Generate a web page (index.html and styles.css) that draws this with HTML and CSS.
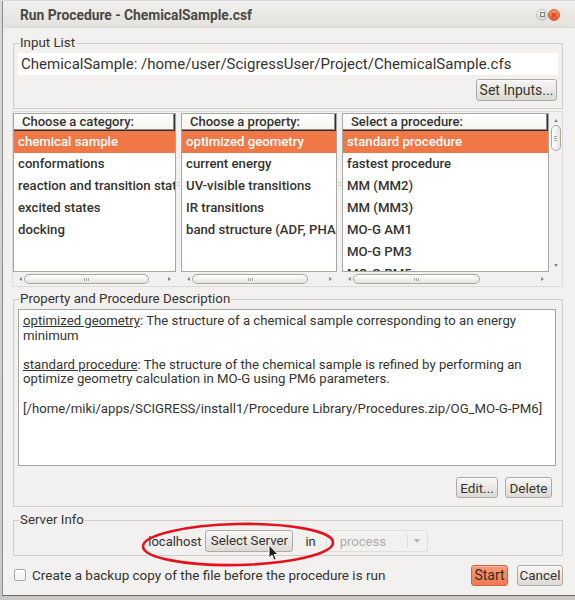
FILE: index.html
```html
<!DOCTYPE html>
<html>
<head>
<meta charset="utf-8">
<title>Run Procedure</title>
<link rel="stylesheet" href="styles.css">
</head>
<body>
<div class="desktop">
  <div class="window">
    <div class="titlebar">
      <span class="title">Run Procedure - ChemicalSample.csf</span>
      <div class="wbtns">
        <span class="wbtn wmax"><span class="sq"></span></span>
        <span class="wbtn wclose"><svg width="6" height="6" viewBox="0 0 6 6"><path d="M0.8 0.8 L5.2 5.2 M5.2 0.8 L0.8 5.2" stroke="#c7461c" stroke-width="1.2"/></svg></span>
      </div>
    </div>
    <div class="content">
      <fieldset class="group g-input">
        <legend>Input List</legend>
        <div class="field">ChemicalSample: /home/user/ScigressUser/Project/ChemicalSample.cfs</div>
        <div class="btnrow"><button class="btn btn-set">Set Inputs...</button></div>
      </fieldset>

      <div class="lists">
        <div class="col c1">
          <div class="box">
            <div class="hdr">Choose a category:</div>
            <ul class="items">
              <li class="sel">chemical sample</li>
              <li>conformations</li>
              <li>reaction and transition states</li>
              <li>excited states</li>
              <li>docking</li>
            </ul>
          </div>
          <div class="hscroll">
            <span class="arr arr-l"></span>
            <div class="track"><div class="thumb"><span class="grip"><i></i><i></i><i></i></span></div></div>
            <span class="arr arr-r"></span>
          </div>
        </div>
        <div class="split"><span class="sgrip"></span></div>
        <div class="col c2">
          <div class="box">
            <div class="hdr">Choose a property:</div>
            <ul class="items">
              <li class="sel">optimized geometry</li>
              <li>current energy</li>
              <li>UV-visible transitions</li>
              <li>IR transitions</li>
              <li>band structure (ADF, PHASE)</li>
            </ul>
          </div>
          <div class="hscroll">
            <span class="arr arr-l"></span>
            <div class="track"><div class="thumb"><span class="grip"><i></i><i></i><i></i></span></div></div>
            <span class="arr arr-r"></span>
          </div>
        </div>
        <div class="split"><span class="sgrip"></span></div>
        <div class="col c3">
          <div class="c3top">
            <div class="box">
              <div class="hdr">Select a procedure:</div>
              <ul class="items">
                <li class="sel">standard procedure</li>
                <li>fastest procedure</li>
                <li>MM (MM2)</li>
                <li>MM (MM3)</li>
                <li>MO-G AM1</li>
                <li>MO-G PM3</li>
                <li>MO-G PM5</li>
              </ul>
            </div>
            <div class="vscroll">
              <span class="varr varr-u"></span>
              <div class="vtrack"><div class="vthumb"><span class="vgrip"><i></i><i></i><i></i></span></div></div>
              <span class="varr varr-d"></span>
            </div>
          </div>
          <div class="c3bottom">
            <div class="hscroll">
              <span class="arr arr-l"></span>
              <div class="track"><div class="thumb"><span class="grip"><i></i><i></i><i></i></span></div></div>
              <span class="arr arr-r"></span>
            </div>
            <div class="corner"></div>
          </div>
        </div>
      </div>

      <fieldset class="group g-desc">
        <legend>Property and Procedure Description</legend>
        <div class="textarea">
          <p><u>optimized geometry</u>: The structure of a chemical sample corresponding to an energy<br>minimum</p>
          <p><u>standard procedure</u>: The structure of the chemical sample is refined by performing an<br>optimize geometry calculation in MO-G using PM6 parameters.</p>
          <p>[/home/miki/apps/SCIGRESS/install1/Procedure Library/Procedures.zip/OG_MO-G-PM6]</p>
        </div>
        <div class="btnrow btnrow-desc">
          <button class="btn btn-edit">Edit...</button>
          <button class="btn btn-del">Delete</button>
        </div>
      </fieldset>

      <fieldset class="group g-server">
        <legend>Server Info</legend>
        <div class="srow">
          <span class="host">localhost</span>
          <button class="btn btn-server">Select Server</button>
          <span class="in">in</span>
          <div class="combo"><span class="cmark"></span><span class="ctext">process</span><span class="carr"></span></div>
          <svg class="ring" width="200" height="50" viewBox="0 0 200 50"><ellipse cx="99" cy="24.5" rx="95" ry="20.5" transform="rotate(-1.2 99 24.5)" fill="none" stroke="#e5121b" stroke-width="2.6"/></svg>
          <svg class="cursor" width="12" height="18" viewBox="0 0 12 18"><path d="M1 1 L1 14 L4 11.2 L6.3 16.2 L8.3 15.3 L6.1 10.5 L10 10.5 Z" fill="#1e1e1e" stroke="#ffffff" stroke-width="1" stroke-linejoin="round"/></svg>
        </div>
      </fieldset>

      <div class="bottom">
        <label class="chk"><span class="box-chk"></span><span class="chk-text">Create a backup copy of the file before the procedure is run</span></label>
        <div class="actions">
          <button class="btn btn-start">Start</button>
          <button class="btn btn-cancel">Cancel</button>
        </div>
      </div>
    </div>
  </div>
</div>
</body>
</html>
```

FILE: styles.css
```css
* { box-sizing: border-box; }

html, body {
  margin: 0;
  padding: 0;
}

body {
  width: 575px;
  height: 600px;
  overflow: hidden;
  background: #cfcfcf;
  font-family: Roboto, "Noto Sans", "DejaVu Sans", sans-serif;
  color: #35342f;
}

.desktop {
  height: 600px;
  padding: 1px 0 0 2px;
  background: linear-gradient(#d8d8d8, #c8c8c8);
}

.window {
  width: 573px;
  height: 595px;
  background: #f2f1f0;
  border-left: 1px solid #8d8d8d;
  border-bottom: 1px solid #6e6e6e;
  display: flex;
  flex-direction: column;
  position: relative;
}

/* ---------- title bar ---------- */
.titlebar {
  height: 27px;
  flex: none;
  display: flex;
  align-items: center;
  padding: 1px 0 0 17px;
  background: linear-gradient(#f0efed, #e4e2de);
  border-bottom: 1px solid #dcd9d4;
}

.title {
  font-weight: 700;
  font-size: 13.8px;
  color: #4a4945;
}

.wbtns {
  margin-left: auto;
  margin-right: 15px;
  display: flex;
}

.wbtn {
  width: 12px;
  height: 12px;
  border-radius: 50%;
  display: flex;
  align-items: center;
  justify-content: center;
}

.wmax {
  background: linear-gradient(#f6f5f3, #d9d7d2);
  border: 1px solid #c3c0bb;
}

.wmax .sq {
  width: 5px;
  height: 5px;
  border: 1px solid #807e79;
}

.wclose {
  background: linear-gradient(#f79470, #e4582b);
  border: 1px solid #d65a30;
}

/* ---------- content ---------- */
.content {
  flex: 1;
  display: flex;
  flex-direction: column;
  padding: 0 12px 0 10px;
}

.group {
  margin: 0;
  padding: 0 4px;
  border: 1px solid #d2cfca;
  min-width: 0;
}

.group legend {
  padding: 0 1px;
  margin-left: 1px;
  font-size: 13.3px;
  line-height: 16px;
  color: #35342f;
}

.g-input {
  margin-top: 7px;
  padding-bottom: 7px;
}

.field {
  margin-top: 2px;
  height: 22px;
  background: #ffffff;
  padding-left: 3px;
  font-size: 15px;
  line-height: 22px;
  white-space: nowrap;
  overflow: hidden;
}

.btnrow {
  display: flex;
  justify-content: flex-end;
  margin-top: 4px;
}

.btn {
  font-family: inherit;
  font-size: 13.5px;
  color: #35342f;
  height: 22px;
  padding: 0;
  border: 1px solid #aeaba5;
  border-radius: 3px;
  background: linear-gradient(#f7f6f5, #dddad5);
  box-shadow: inset 0 1px 0 #ffffff;
  line-height: 18px;
  white-space: nowrap;
}

.btn-set { width: 81px; margin-right: 1px; font-size: 14px; }

/* ---------- lists ---------- */
.lists {
  margin-top: 2px;
  margin-left: -1px;
  height: 176px;
  border: 1px solid #dedbd6;
  padding-top: 1px;
  display: flex;
}

.col {
  display: flex;
  flex-direction: column;
  min-width: 0;
}

.c1 { width: 163px; }
.c2 { width: 156px; }
.c3 { flex: 1; }

.split {
  width: 5px;
  flex: none;
  display: flex;
  align-items: center;
  justify-content: center;
}

.sgrip {
  width: 3px;
  height: 4px;
  border-top: 1px solid #c9c6c1;
  border-bottom: 1px solid #c9c6c1;
  margin-top: -32px;
}

.box {
  height: 159px;
  border: 1px solid #aaa7a2;
  background: #ffffff;
  display: flex;
  flex-direction: column;
  overflow: hidden;
  min-width: 0;
}

.hdr {
  height: 17px;
  flex: none;
  padding-left: 8px;
  font-size: 13px;
  font-weight: 500;
  line-height: 16px;
  white-space: nowrap;
  background: linear-gradient(#ffffff, #f4f3f1);
  border-right: 1px solid #2f2f2f;
  border-bottom: 1px solid #2f2f2f;
  box-shadow: inset -1px -1px 0 #8e8c88;
}

.items {
  list-style: none;
  margin: 0;
  padding: 0;
  flex: 1;
  overflow: hidden;
}

.items li {
  height: 22px;
  line-height: 22px;
  padding-left: 4px;
  font-size: 13.2px;
  font-weight: 500;
  white-space: nowrap;
  overflow: hidden;
  text-overflow: clip;
}

.items li.sel {
  background: #f07746;
  color: #ffffff;
}

/* horizontal scrollbars */
.hscroll {
  height: 14px;
  display: flex;
  align-items: center;
  padding: 0 3px;
}

.arr {
  width: 8px;
  flex: none;
  display: flex;
  justify-content: center;
}

.arr::before {
  content: "";
  border-top: 2.5px solid transparent;
  border-bottom: 2.5px solid transparent;
}

.arr-l::before { border-right: 3px solid #8a8884; }
.arr-r::before { border-left: 3px solid #8a8884; }

.track {
  flex: 1;
  display: flex;
}

.thumb {
  height: 10px;
  border: 1px solid #aba8a3;
  border-radius: 5px;
  background: linear-gradient(#ffffff, #e6e4e0);
  display: flex;
  align-items: center;
  justify-content: center;
}

.c1 .thumb { width: 125px; }
.c2 .thumb { width: 116px; }
.c3 .thumb { width: 127px; }

.grip {
  display: flex;
  gap: 1px;
}

.grip i {
  width: 1px;
  height: 3px;
  background: #a7a5a0;
}

/* column 3 */
.c3top {
  display: flex;
}

.c3top .box { flex: 1; }

.c3bottom {
  display: flex;
}

.c3bottom .hscroll { flex: 1; }

.corner {
  width: 13px;
  flex: none;
}

.vscroll {
  width: 13px;
  flex: none;
  height: 159px;
  display: flex;
  flex-direction: column;
  align-items: center;
  padding: 3px 0;
}

.varr {
  height: 8px;
  flex: none;
  display: flex;
  align-items: center;
}

.varr::before {
  content: "";
  border-left: 2.5px solid transparent;
  border-right: 2.5px solid transparent;
}

.varr-u::before { border-bottom: 3px solid #8a8884; }
.varr-d::before { border-top: 3px solid #8a8884; }

.vtrack {
  flex: 1;
  width: 100%;
  display: flex;
  flex-direction: column;
  align-items: center;
}

.vthumb {
  width: 10px;
  height: 26px;
  margin-top: 1px;
  border: 1px solid #aba8a3;
  border-radius: 5px;
  background: linear-gradient(90deg, #ffffff, #e6e4e0);
  display: flex;
  align-items: center;
  justify-content: center;
}

.vgrip {
  display: flex;
  flex-direction: column;
  gap: 1px;
}

.vgrip i {
  width: 3px;
  height: 1px;
  background: #a7a5a0;
}

/* ---------- description ---------- */
.g-desc {
  margin-top: 4px;
  padding: 0 6px 8px 4px;
}

.textarea {
  margin-top: 2px;
  height: 157px;
  background: #ffffff;
  border: 1px solid #a9a6a1;
  padding: 4px 4px;
  font-size: 13.2px;
  line-height: 14.6px;
  white-space: nowrap;
  overflow: hidden;
}

.textarea p {
  margin: 0 0 14.6px 0;
}

.btnrow-desc {
  margin-top: 11px;
  gap: 7px;
  padding-right: 4px;
}

.btnrow-desc .btn { height: 21px; }
.btn-edit { width: 42px; }
.btn-del { width: 47px; }

/* ---------- server ---------- */
.g-server {
  margin-top: 5px;
  padding: 0 4px 3px 4px;
}

.srow {
  position: relative;
  margin-top: 2px;
  height: 22px;
  display: flex;
  align-items: center;
  justify-content: center;
  font-size: 13px;
}

.host { margin-right: 4px; }

.btn-server { width: 88px; font-size: 13.3px; }

.in { margin: 0 10px 0 12px; }

.combo {
  width: 102px;
  height: 22px;
  border: 1px solid #e2dfda;
  border-radius: 2px;
  background: #f2f1f0;
  display: flex;
  align-items: center;
  color: #aeaca7;
}

.cmark {
  width: 1px;
  height: 6px;
  background: #c9c6c1;
  margin: 0 6px 0 6px;
}

.ctext { flex: 1; }

.carr {
  width: 20px;
  height: 14px;
  border-left: 1px solid #e2dfda;
  display: flex;
  align-items: center;
  justify-content: center;
}

.carr::before {
  content: "";
  border-left: 3px solid transparent;
  border-right: 3px solid transparent;
  border-top: 4px solid #b5b3ae;
}

.ring {
  position: absolute;
  left: 121px;
  top: -10px;
  pointer-events: none;
}

.cursor {
  position: absolute;
  left: 250px;
  top: 14px;
  pointer-events: none;
}

/* ---------- bottom ---------- */
.bottom {
  margin-top: 9px;
  display: flex;
  align-items: center;
  height: 20px;
}

.chk {
  display: flex;
  align-items: center;
  font-size: 13.5px;
  padding-left: 1px;
}

.box-chk {
  width: 12px;
  height: 12px;
  border: 1px solid #a9a6a1;
  border-radius: 2px;
  background: linear-gradient(#ffffff, #f1f0ee);
  margin-right: 6px;
}

.actions {
  margin-left: auto;
  display: flex;
  gap: 9px;
}

.actions .btn { height: 21px; }

.btn-start {
  width: 37px;
  font-size: 14px;
  background: linear-gradient(#f69a78, #ee7a50);
  border-color: #d3623c;
  box-shadow: inset 0 1px 0 #f9b59b;
  color: #3a2a22;
}

.btn-cancel { width: 46px; }
```
